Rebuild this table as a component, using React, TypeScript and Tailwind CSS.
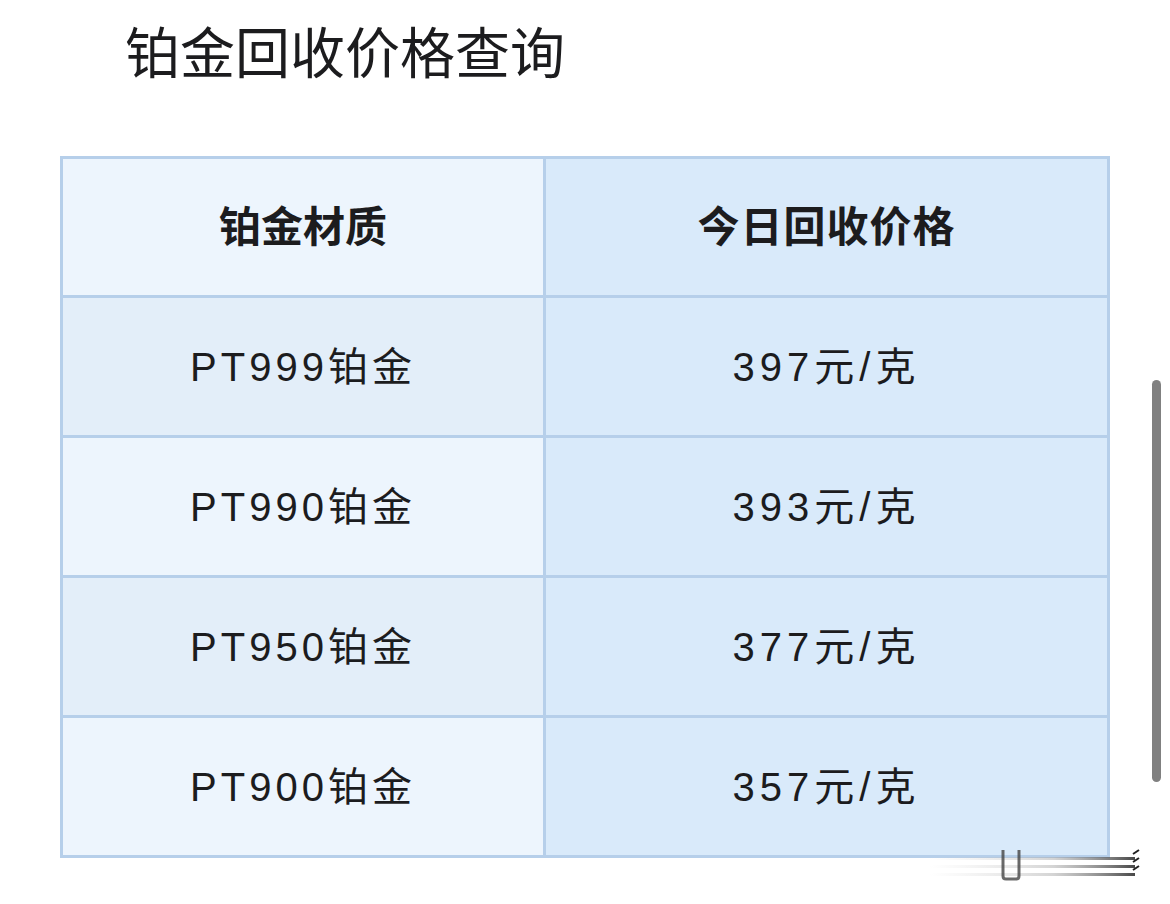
const rows = [
  { name: "PT999铂金", price: "397元/克" },
  { name: "PT990铂金", price: "393元/克" },
  { name: "PT950铂金", price: "377元/克" },
  { name: "PT900铂金", price: "357元/克" },
];

const font = "font-['Liberation_Sans','Noto_Sans_CJK_SC',sans-serif]";

export default function App() {
  return (
    <div className={`relative w-[1170px] h-[904px] overflow-hidden bg-white text-[#1c1c1e] ${font}`}>
      <h1 className="pl-[125px] pt-[27px] text-[55px] leading-none font-normal">
        铂金回收价格查询
      </h1>

      <div className="mt-[74px] ml-[60px] w-[1050px] grid grid-cols-[480px_561px] gap-[3px] p-[3px] bg-[#b6cfea]">
        <div className="h-[136px] bg-[#edf5fd] flex items-center justify-center text-[42px] font-bold">
          铂金材质
        </div>
        <div className="h-[136px] bg-[#d9eafa] flex items-center justify-center text-[42px] font-bold tracking-[1px]">
          今日回收价格
        </div>
        {rows.map((r, i) => (
          <>
            <div
              key={r.name}
              className={`h-[137px] flex items-center justify-center text-[40px] tracking-[4px] ${
                i % 2 === 0 ? "bg-[#e3eef9]" : "bg-[#edf5fd]"
              }`}
            >
              {r.name}
            </div>
            <div
              key={r.price}
              className="h-[137px] bg-[#d9eafa] flex items-center justify-center text-[40px] tracking-[5px]"
            >
              {r.price}
            </div>
          </>
        ))}
      </div>

      {/* scrollbar */}
      <div className="absolute left-[1152px] top-[380px] w-[9px] h-[402px] rounded-full bg-[#808080]" />

      {/* streaky watermark */}
      <svg className="absolute left-[920px] top-[840px]" width="240" height="50" viewBox="0 0 240 50">
        <defs>
          <linearGradient id="ln" x1="0" x2="1" y1="0" y2="0">
            <stop offset="0" stopColor="#ccc" stopOpacity="0" />
            <stop offset="0.6" stopColor="#aaa" stopOpacity="0.5" />
            <stop offset="1" stopColor="#333" stopOpacity="0.9" />
          </linearGradient>
        </defs>
        <rect x="10" y="17" width="205" height="3" fill="url(#ln)" />
        <rect x="10" y="25" width="205" height="3" fill="url(#ln)" />
        <rect x="10" y="33" width="205" height="3" fill="url(#ln)" />
        <path d="M213 14 l6 -4 M213 22 l6 -4 M213 30 l6 -4" stroke="#222" strokeWidth="2" />
        <path d="M83 10 V36 q0 3 3 3 h10 q3 0 3 -3 V10" fill="none" stroke="#444" strokeWidth="3" opacity="0.8" />
      </svg>
    </div>
  );
}
